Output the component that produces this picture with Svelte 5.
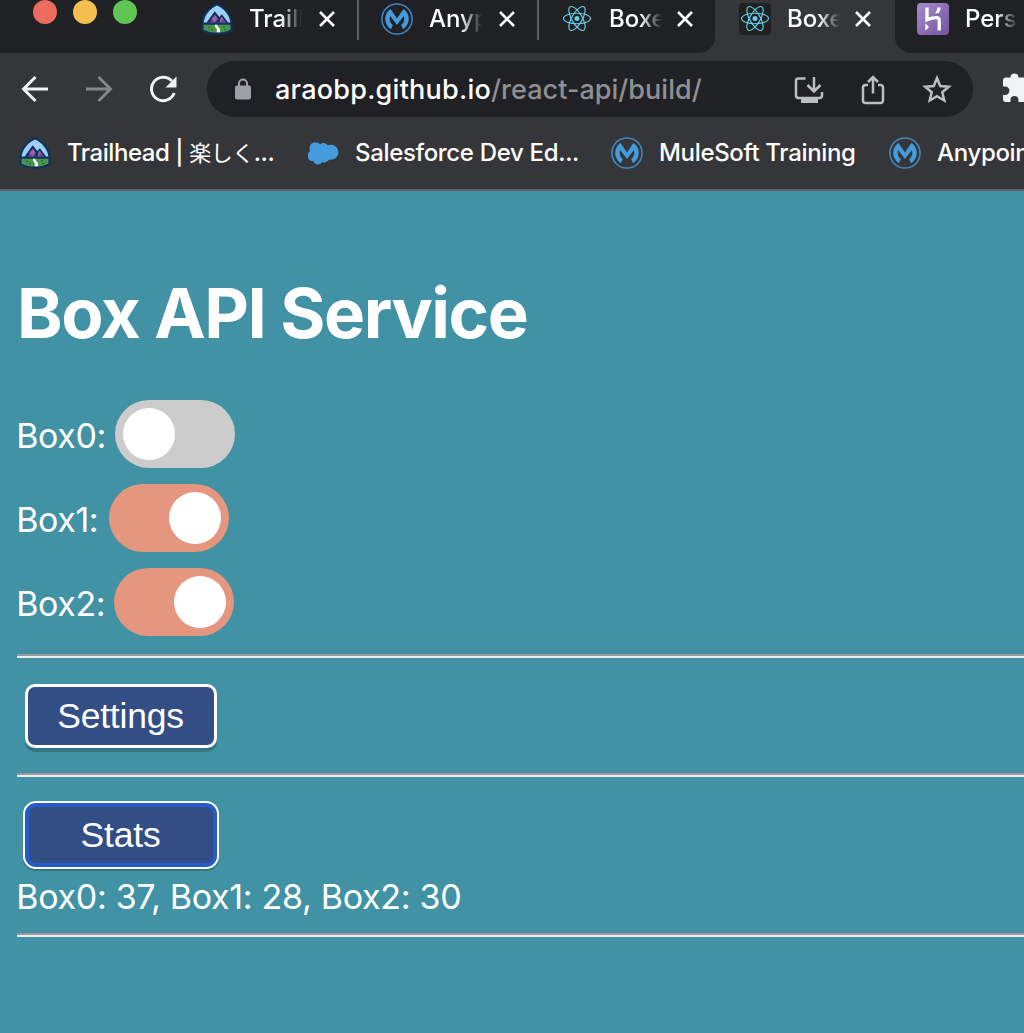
<script>
  const idleTabs = [
    { icon: 'trail', title: 'Trailhead' },
    { icon: 'mule', title: 'Anypoint' },
    { icon: 'react', title: 'Boxes' },
  ];
  const bookmarks = [
    { icon: 'trail', title: 'Trailhead | ', native: '楽しく', tail: '...', kind: 'trailhead' },
    { icon: 'cloud', title: 'Salesforce Dev Ed...', kind: 'salesforce' },
    { icon: 'mule', title: 'MuleSoft Training', kind: 'training' },
    { icon: 'mule', title: 'Anypoint Platform', kind: 'anypoint' },
  ];
  let boxes = $state([
    { name: 'Box0', on: false, count: 37, labelWidth: 98 },
    { name: 'Box1', on: true, count: 28, labelWidth: 92 },
    { name: 'Box2', on: true, count: 30, labelWidth: 97 },
  ]);
  const stats = $derived(boxes.map((b) => `${b.name}: ${b.count}`).join(', '));
</script>

{#snippet icon(name)}
  <svg class="icon" viewBox="0 0 32 32" aria-hidden="true">
    {#if name === 'trail'}
      <path d="M16 .3C8 3.500 .5 12 .5 20.500v7.300C5 30.300 10 31.600 16 31.600s11-1.300 15.500-3.800v-7.300C31.500 12 24 3.500 16 .3z" fill="#12305f" />
      <path d="M16 2.500C9.500 5.200 3.500 12 2.600 19.500h26.800C28.500 12 22.500 5.200 16 2.500z" fill="#9dd0f5" />
      <path d="M5.500 19.700 13.700 8.300l4.700 5.700 2.400-2.700 6.500 8.400z" fill="#12305f" />
      <path d="m9.500 19.600 1.400-4.400 3-3.400 3 4.200-3 3.600zM18.500 19.600l1-4.600 1.300-1.300 3.700 5.900z" fill="#9b5fae" />
      <path d="m8.500 19.600 2-3.200 3.200 3.200zM19.500 19.600l2-2.800 3 2.800z" fill="#74318c" />
      <path d="M2.600 21.800h26.800v4.900C25 28.800 21 29.500 16 29.500S7 28.800 2.600 26.700z" fill="#47964b" />
      <path d="M14 21.800h2.500c-1.500 2 3.600 2.200 2.500 7.400h-3.500c2-4-2.800-4.400-1.500-7.400z" fill="#fff" />
      <path d="M7 24.300h2m1 2.500h2m10-3h2m-1 2.700h2" stroke="#245b39" stroke-width="1" />
    {:else if name === 'mule'}
      <circle cx="16" cy="16" r="15.100" fill="none" stroke="#408cc5" stroke-width="1.500" />
      <path d="M9.600 6 16 15.400 22.400 6c3.300 2.100 5.400 5.700 5.400 9.800 0 4.400-2.100 8.100-5.700 10.400l-1.900-4.100c2.800-2.200 3.800-5.500 2.700-9L16 22l-6.900-8.900c-1.100 3.500-.1 6.800 2.700 9l-1.900 4.100c-3.600-2.300-5.700-6-5.700-10.400C4.200 11.700 6.300 8.100 9.600 6z" fill="#459bdc" />
    {:else if name === 'react'}
      <rect width="32" height="32" rx="4" fill="#202222" />
      <g fill="none" stroke="#67cdea" stroke-width="1.150">
        <ellipse cx="16" cy="15.500" rx="13.500" ry="5.200" />
        <ellipse cx="16" cy="15.500" rx="13.500" ry="5.200" transform="rotate(60 16 15.500)" />
        <ellipse cx="16" cy="15.500" rx="13.500" ry="5.200" transform="rotate(120 16 15.500)" />
      </g>
      <circle cx="16" cy="15.500" r="2.500" fill="#67cdea" />
    {:else if name === 'cloud'}
      <path d="M13.300 7.500C15 5.600 18.800 5.400 20.800 8.300c5.400-2.200 10.600 1.500 10.600 6.800 0 5.400-4.500 8.500-9.500 7.600-1.700 2.700-4.600 3.300-6.800 2.200-2.100 3.700-7.600 3.200-8.900-.9C2.800 24.500.8 21.900.8 18.700c0-2 .9-3.700 2.200-4.700C1.600 9.300 4 5.200 8.100 5.200c2.200 0 4 .8 5.200 2.300z" fill="#459bdc" />
    {:else if name === 'heroku'}
      <defs>
        <linearGradient id="violet" x1="0" y1="0" x2="1" y2="1">
          <stop stop-color="#a78acb" /><stop offset="1" stop-color="#7354a0" />
        </linearGradient>
      </defs>
      <rect width="32" height="32" rx="4" fill="url(#violet)" />
      <path d="M10 4.500v12.300c4-1.600 7.500-2.100 9.500-2.100 2 0 2.700 1 2.700 3V27.500" fill="none" stroke="#fff" stroke-width="3.300" />
      <path d="M8.300 20.300v7.400l3.700-3.700zM20.300 4.500h3.500c-.2 2.200-1.100 4-2.400 5.700H18c1.400-1.700 2.200-3.500 2.300-5.700z" fill="#fff" />
    {/if}
  </svg>
{/snippet}

{#snippet close()}
  <svg class="close" viewBox="0 0 18 18" aria-hidden="true"><path d="m2 2 14 14M16 2 2 16" /></svg>
{/snippet}

<div class="window">
  <header class="tabstrip">
    <div class="group left">
      <div class="lights"><i class="red"></i><i class="amber"></i><i class="green"></i></div>
      {#each idleTabs as tab}
        <div class="tab">
          {@render icon(tab.icon)}<span class="title">{tab.title}</span>{@render close()}
        </div>
      {/each}
    </div>
    <div class="tab active">
      {@render icon('react')}<span class="title">Boxes</span>{@render close()}
    </div>
    <div class="group right">
      <div class="tab last">{@render icon('heroku')}<span class="title">Personal</span></div>
    </div>
  </header>

  <div class="toolbar">
    <nav>
      <svg viewBox="0 0 28 28" stroke="#f1f3f4"><path d="M27 14H3M14.500 2 2.500 14l12 12" /></svg>
      <svg viewBox="0 0 28 28" stroke="#86878a"><path d="M1 14h24M13.500 2l12 12-12 12" /></svg>
      <svg viewBox="0 0 28 28" stroke="#f1f3f4"><path d="M22.800 6A11.700 11.700 0 1 0 25.200 18" /><path d="M27.500 1.500v11h-11z" fill="#f1f3f4" stroke="none" /></svg>
    </nav>
    <div class="omnibox">
      <svg class="lock" viewBox="0 0 16 22"><rect y="7.500" width="16" height="14" rx="2" fill="#9aa0a6" /><path d="M4 9V5.500a4 4 0 0 1 8 0V9" fill="none" stroke="#9aa0a6" stroke-width="2" /></svg>
      <span class="url"><b>araobp.github.io</b><span>/react-api/build/</span></span>
      <div class="actions">
        <svg viewBox="0 0 32 32"><path d="M12.500 5.500H5.400A2.400 2.400 0 0 0 3 7.900v14.700A2.400 2.400 0 0 0 5.400 25h21.200a2.400 2.400 0 0 0 2.400-2.400V19M21 4v14M14.500 12l6.500 6.500 6.500-6.500" /><path d="M8 25h17v5H8z" fill="#bdbebf" stroke="none" /></svg>
        <svg viewBox="0 0 32 32"><path d="M11 12H8.500A2.500 2.500 0 0 0 6 14.500v13A2.500 2.500 0 0 0 8.500 30h15a2.500 2.500 0 0 0 2.500-2.500v-13a2.500 2.500 0 0 0-2.500-2.500H21M16 20.500V5M11 9l5-5 5 5" /></svg>
        <svg viewBox="0 0 32 32"><path d="m16 5 3.200 8 8.600.7-6.500 5.600 2 8.200-7.300-4.400-7.300 4.400 2-8.200-6.500-5.600 8.600-.7z" /></svg>
      </div>
    </div>
    <svg class="puzzle" viewBox="0 0 32 32"><path d="M26.500 14H24V7.500a3 3 0 0 0-3-3h-4.500a4 4 0 0 0-8 0H4a3 3 0 0 0-3 3v6h2.200a4.200 4.200 0 0 1 0 8.400H1V26a3 3 0 0 0 3 3h4.500v-2a4 4 0 0 1 8 0v2H21a3 3 0 0 0 3-3v-4h2.500a4 4 0 0 0 0-8z" fill="#f1f3f4" /></svg>
  </div>

  <div class="bookmarks">
    {#each bookmarks as mark}
      <div class="bookmark {mark.kind}">
        {@render icon(mark.icon)}<span>{mark.title}{#if mark.native}<span class="native">{mark.native}</span>{mark.tail}{/if}</span>
      </div>
    {/each}
  </div>

  <main>
    <h1>Box API Service</h1>
    {#each boxes as box}
      <div class="row">
        <span class="label" style:width="{box.labelWidth}px">{box.name}:</span>
        <button class="switch" class:on={box.on} aria-label={box.name} onclick={() => (box.on = !box.on)}><i></i></button>
      </div>
    {/each}
    <hr />
    <button class="action">Settings</button>
    <hr />
    <button class="action focused">Stats</button>
    <p>{stats}</p>
    <hr />
  </main>
</div>

<style>
  :global(body) { margin: 0; overflow: hidden; background: #4192a4; }
  .window {
    width: 1024px; height: 1033px; overflow: hidden; color: #fff;
    font-family: Inter, "Noto Sans CJK JP", sans-serif;
    display: flex; flex-direction: column; background: #4192a4;
  }
  svg { display: block; flex: none; }
  .icon { width: 32px; height: 32px; }

  .tabstrip { display: flex; height: 53px; flex: none; background: #35363a; }
  .group { display: flex; background: #202124; box-sizing: border-box; }
  .left { width: 715px; padding-left: 33px; border-bottom-right-radius: 16px; }
  .right { flex: 1; min-width: 0; border-bottom-left-radius: 16px; }
  .lights { display: flex; gap: 16px; margin-right: 42px; }
  .lights i { width: 24px; height: 24px; border-radius: 50%; }
  .red { background: #ed6a5f; }
  .amber { background: #f5bf4f; }
  .green { background: #61c554; }
  .tab {
    display: flex; align-items: center; box-sizing: border-box; flex: none;
    width: 180px; height: 40px; padding: 0 20px 2px 22px; border-right: 2px solid #5f6063;
  }
  .left .tab:last-child { width: 176px; border: 0; }
  .active { padding: 0 22px 2px 24px; border: 0; }
  .last { border: 0; }
  .title {
    width: 53px; margin-left: 16px; overflow: hidden; white-space: nowrap;
    font-size: 24px; line-height: 32px; font-weight: 450;
    mask-image: linear-gradient(90deg, #000 60%, transparent 100%);
  }
  .close { width: 18px; height: 18px; margin-left: 16px; fill: none; stroke: #fff; stroke-width: 2.6; }
  .active .close, .left .tab:last-child .close { margin-left: 14px; }

  .toolbar { display: flex; align-items: center; height: 72px; flex: none; background: #35363a; }
  nav { display: flex; gap: 36px; margin-left: 21px; width: 186px; flex: none; }
  nav svg { width: 28px; height: 28px; fill: none; stroke-width: 2.9; }
  .omnibox {
    display: flex; align-items: center; box-sizing: border-box; flex: none;
    width: 766px; height: 56px; padding: 0 20px 0 28px; border-radius: 28px; background: #202124;
  }
  .lock { width: 16px; height: 22px; }
  .url { margin-left: 24px; font-size: 27px; color: #8f9092; white-space: nowrap; letter-spacing: 0.03px; font-weight: 450; }
  .url b { font-weight: 500; color: #fff; letter-spacing: 0.25px; }
  .actions { display: flex; gap: 32px; margin-left: auto; }
  .actions svg { width: 32px; height: 32px; fill: none; stroke: #bdbebf; stroke-width: 2.5; }
  .puzzle { width: 32px; height: 32px; margin-left: 29px; }

  .bookmarks {
    display: flex; align-items: center; height: 64px; flex: none;
    background: #35363a; border-bottom: 2px solid #5f6063;
  }
  .bookmark {
    display: flex; align-items: center; gap: 16px; flex: none; margin-bottom: 8px;
    font-size: 24px; line-height: 32px; font-weight: 450; letter-spacing: -0.33px; white-space: nowrap;
  }
  .trailhead { width: 288px; margin-left: 19px; letter-spacing: -0.45px; }
  .native { font-size: 22px; font-weight: 400; }
  .salesforce { width: 304px; }
  .training { width: 278px; }

  main { padding: 83px 0 0 17px; }
  h1 { margin: 0 0 47px; font-size: 69px; line-height: 79px; font-weight: 700; letter-spacing: -1.45px; }
  .row { display: flex; align-items: center; height: 68px; margin-bottom: 16px; font-size: 34px; letter-spacing: -0.4px; }
  .label { padding-top: 3px; text-indent: -0.8px; white-space: nowrap; }
  .switch { width: 120px; height: 68px; padding: 8px; border: 0; border-radius: 34px; background: #ccc; display: flex; }
  .switch i { width: 52px; height: 52px; border-radius: 50%; background: #fff; }
  .switch.on { background: #e5967e; justify-content: flex-end; }
  hr { margin: 0; border: 0; height: 2px; background: #9a9a9a; border-bottom: 2px solid #eee; }
  .row + hr { margin-top: 18px; }
  .row:has(+ hr) { margin-bottom: 0; }
  .action {
    display: block; box-sizing: border-box; width: 192px; height: 64px; margin: 26px 0 25px 8px; padding: 0 1px 1px 0;
    border: 3px solid #fff; border-radius: 10px; background: #334e85; color: #fff;
    font: 35.5px/58px "Liberation Sans", sans-serif; letter-spacing: -0.2px; box-shadow: 0 4px 0 rgba(0, 0, 0, 0.2);
  }
  .focused {
    width: 196px; height: 68px; margin: 24px 0 7px 6px; border: 2px solid #fff; border-radius: 13px;
    box-shadow: inset 0 0 0 4px #265cc8, 0 2px 0 rgba(0, 0, 0, 0.2);
  }
  p { margin: 0 0 15px; font-size: 34px; line-height: 42px; letter-spacing: -0.3px; text-indent: -0.8px; white-space: nowrap; }
</style>
